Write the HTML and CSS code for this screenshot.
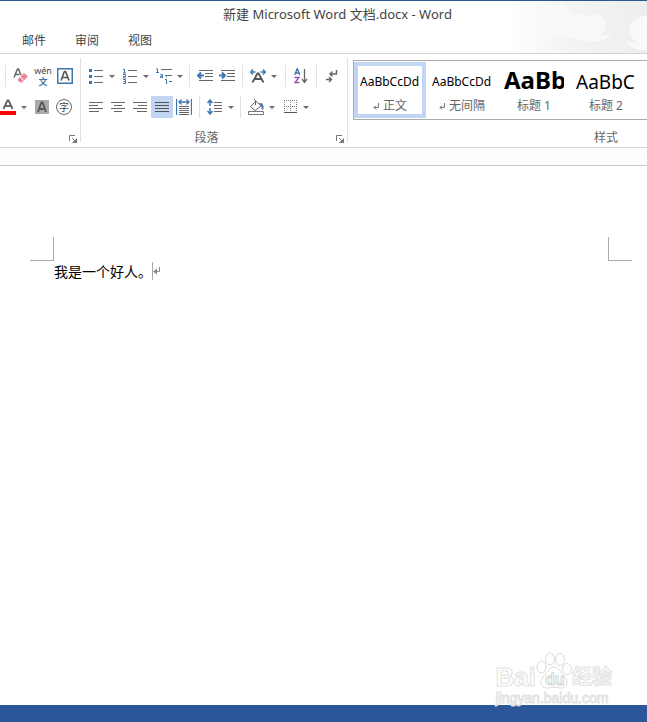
FILE: index.html
```html
<!DOCTYPE html>
<html lang="zh-CN">
<head>
<meta charset="utf-8">
<meta name="viewport" content="width=device-width, initial-scale=1">
<title>新建 Microsoft Word 文档.docx - Word</title>
<link rel="stylesheet" href="styles.css">
</head>
<body>
<svg class="defs" aria-hidden="true">
  <symbol id="caret" viewBox="0 0 6 3"><path d="M0 0h6L3 3z" fill="#6a6a6a"/></symbol>
  <symbol id="launch" viewBox="0 0 8 8"><path d="M.5 6V.5H6" fill="none" stroke="#777"/><path d="M3 3l3 3" stroke="#777"/><path d="M8 3v5H3z" fill="#777"/></symbol>
</svg>
<div class="app">
  <header class="titlebar">
    <svg class="art" viewBox="0 0 137 52" aria-hidden="true">
      <defs><linearGradient id="fade"><stop offset="0" stop-color="#fff"/><stop offset=".4" stop-color="#f4f4f4"/><stop offset="1" stop-color="#eee"/></linearGradient></defs>
      <path d="M0 0h137v52H0z" fill="url(#fade)"/>
      <path d="M30 36c4-3 3-6 1-10C25 10 37 3 45 3c9 0 17 7 19 13 4-5 9-3 11 1 5-6 18-4 20 4 2 7-3 13-9 14 6 1 11-1 15-4-3 9-15 11-25 9-12-3-30-8-46-4z" fill="#f9f9f9"/>
      <path d="M137 15c-12-1-19 9-17 17 1 4 4 8 8 9-6 2-10 0-12-2 2 7 12 11 21 10z" fill="#f9f9f9"/>
    </svg>
    <h1 class="title">新建 Microsoft Word 文档.docx - Word</h1>
    <nav class="tabs"><button>邮件</button><button>审阅</button><button>视图</button></nav>
  </header>

  <section class="ribbon">
    <div class="group font">
      <div class="row">
        <span class="sep"></span>
        <button class="tool" aria-label="清除格式"><svg width="16" height="16"><path d="M1 9.500 4.500 1h1L8 7M2.500 6.500h4" fill="none" stroke="#666" stroke-width="1.500"/><path d="M5 11l6-6 4 3.500-6 6H7L5 12.500z" fill="#e8899b"/><path d="M6.500 8.500l5 4.500" stroke="#fff"/></svg></button>
        <button class="tool pinyin" aria-label="拼音指南"><span>wén</span><b>文</b></button>
        <button class="tool" aria-label="字符边框"><svg width="16" height="16"><path d="M.75.75h14.500v14.500H.75z" fill="#fff" stroke="#3f76ac" stroke-width="1.500"/><path d="M4 12.500 7.400 3.500h1.200l3.400 9M5 9.500h6" fill="none" stroke="#555" stroke-width="1.600"/></svg></button>
      </div>
      <div class="row cut">
        <button class="tool" aria-label="字体颜色"><svg width="16" height="16"><path d="M3.500 10 7.400 1.500h1.200l3.900 8.500M5 7h6" fill="none" stroke="#666" stroke-width="1.800"/><path d="M0 12h16v4H0z" fill="red"/></svg></button>
        <button class="more" aria-label="更多颜色"><svg width="6" height="3"><use href="#caret"/></svg></button>
        <button class="tool split" aria-label="字符底纹"><svg width="14" height="14"><path d="M0 0h14v14H0z" fill="#aaa"/><path d="M3 12 6.400 2.500h1.200L11 12M4.500 9h5" fill="none" stroke="#555" stroke-width="1.800"/></svg></button>
        <button class="tool" aria-label="带圈字符"><span class="ring">字</span></button>
      </div>
      <div class="foot"><span class="label"></span><button class="launcher" aria-label="字体设置"><svg width="8" height="8"><use href="#launch"/></svg></button></div>
    </div>

    <div class="group para">
      <div class="row">
        <button class="tool" aria-label="项目符号"><svg width="14" height="16"><path d="M0 1h3v3H0zM0 7h3v3H0zM0 13h3v3H0z" fill="#3f76ac"/><path d="M5 2.500h9M5 8.500h9M5 14.500h9" stroke="#666"/></svg></button>
        <button class="more" aria-label="更多符号"><svg width="6" height="3"><use href="#caret"/></svg></button>
        <button class="tool split" aria-label="编号"><svg width="14" height="16"><path d="M0 1.500h1.500V5M0 5h3M0 6.500h2.500v2H.5V10H3M0 11.500h2.500v4H0M.5 13.500h2" fill="none" stroke="#3f76ac"/><path d="M5 2.500h9M5 8.500h9M5 14.500h9" stroke="#666"/></svg></button>
        <button class="more" aria-label="更多编号"><svg width="6" height="3"><use href="#caret"/></svg></button>
        <button class="tool split" aria-label="多级列表"><svg width="16" height="16"><path d="M0 1h1.500v3M0 4.500h3M4.500 6.500h2v3h-2V8h2M9 11.500h1.500V16M10 9h1" fill="none" stroke="#3f76ac"/><path d="M5 1.500h11M9 7.500h7M13 13.500h3" stroke="#666"/></svg></button>
        <button class="more" aria-label="更多列表"><svg width="6" height="3"><use href="#caret"/></svg></button>
        <span class="sep"></span>
        <button class="tool" aria-label="减少缩进量"><svg width="16" height="12"><path d="M2 .5h14M8 3.500h8M8 6.500h8M2 10.500h14" stroke="#666"/><path d="M7 5.500H1M4 2.500l-3 3 3 3" fill="none" stroke="#3f76ac" stroke-width="2"/></svg></button>
        <button class="tool" aria-label="增加缩进量"><svg width="16" height="12"><path d="M2 .5h14M8 3.500h8M8 6.500h8M2 10.500h14" stroke="#666"/><path d="M0 5.500h6M3 2.500l3 3-3 3" fill="none" stroke="#3f76ac" stroke-width="2"/></svg></button>
        <span class="sep"></span>
        <button class="tool" aria-label="中文版式"><svg width="16" height="14"><path d="M2.500 13.500 7.400 4.500h1.200l4.900 9M4.500 10h7" fill="none" stroke="#555" stroke-width="1.800"/><path d="M5.500 3H1M3 .5.700 3 3 5.500M10.500 3H15M13 .5 15.300 3 13 5.500" fill="none" stroke="#3f76ac" stroke-width="1.500"/></svg></button>
        <button class="more" aria-label="更多版式"><svg width="6" height="3"><use href="#caret"/></svg></button>
        <span class="sep wide"></span>
        <button class="tool" aria-label="排序"><svg width="14" height="16"><path d="M.7 7 3 1h.5l2.300 6M1.500 5h3.500" fill="none" stroke="#3f76ac" stroke-width="1.300"/><path d="M.5 9.500H5l-4 5h4.500" fill="none" stroke="#8a55b0" stroke-width="1.300"/><path d="M10.500 1v13M8 11l2.500 3.500L13 11" fill="none" stroke="#666" stroke-width="1.300"/></svg></button>
        <span class="sep"></span>
        <button class="tool" aria-label="显示编辑标记"><svg width="12" height="14"><path d="M10.500 1v4H4M6.500 2.500 4 5l2.500 2.500M0 10.500h5M3 8l2.500 2.500L3 13" fill="none" stroke="#666" stroke-width="1.400"/></svg></button>
      </div>
      <div class="row">
        <button class="tool" aria-label="左对齐"><svg width="14" height="11"><path d="M0 .5h14M0 3.500h9M0 6.500h14M0 9.500h10" stroke="#666"/></svg></button>
        <button class="tool" aria-label="居中"><svg width="14" height="11"><path d="M0 .5h14M3 3.500h8M0 6.500h14M3 9.500h8" stroke="#666"/></svg></button>
        <button class="tool" aria-label="右对齐"><svg width="14" height="11"><path d="M0 .5h14M5 3.500h9M0 6.500h14M4 9.500h10" stroke="#666"/></svg></button>
        <button class="tool on" aria-pressed="true" aria-label="两端对齐"><svg width="14" height="11"><path d="M0 .5h14M0 3.500h14M0 6.500h14M0 9.500h14" stroke="#555"/></svg></button>
        <button class="tool" aria-label="分散对齐"><svg width="16" height="16"><path d="M.5 0v16M15.500 0v16M3 3h10M5.500.5 3 3l2.500 2.500M10.500.5 13 3l-2.500 2.500" fill="none" stroke="#3f76ac" stroke-width="1.300"/><path d="M3 7.500h10M3 9.500h10M3 11.500h10M3 13.500h10M3 15.500h10" stroke="#666"/></svg></button>
        <span class="sep"></span>
        <button class="tool" aria-label="行距"><svg width="16" height="16"><path d="M3 1v14M.5 4 3 1l2.500 3M.5 12 3 15l2.500-3" fill="none" stroke="#3f76ac" stroke-width="1.500"/><path d="M3 7v2" stroke="#fff" stroke-width="2"/><path d="M7 3.500h8M7 6.500h8M7 9.500h8M7 12.500h8" stroke="#666"/></svg></button>
        <button class="more" aria-label="更多行距"><svg width="6" height="3"><use href="#caret"/></svg></button>
        <span class="sep"></span>
        <button class="tool" aria-label="底纹"><svg width="16" height="16"><path d="M2.500 7.500 8 2l5 5-6 4.500zM7.500 6V1.500L6 .5" fill="none" stroke="#666"/><path d="M11 4c3-.5 5 1 4.500 6L14 11c-.5-4-1-5-3-7z" fill="#3f76ac"/><path d="M.5 12.500h15v3H.5z" fill="#fff" stroke="#777"/></svg></button>
        <button class="more" aria-label="更多底纹"><svg width="6" height="3"><use href="#caret"/></svg></button>
        <button class="tool split" aria-label="边框"><svg width="13" height="14"><path d="M0 .5h13M0 6.500h13M.5 0v12M6.500 0v12M12.500 0v12" stroke="#777" stroke-dasharray="1 1"/><path d="M0 12.500h13" stroke="#555"/></svg></button>
        <button class="more" aria-label="更多边框"><svg width="6" height="3"><use href="#caret"/></svg></button>
      </div>
      <div class="foot"><span class="label">段落</span><button class="launcher" aria-label="段落设置"><svg width="8" height="8"><use href="#launch"/></svg></button></div>
    </div>

    <div class="group styles">
      <div class="gallery">
        <button class="style on"><span class="sample">AaBbCcDd</span><span class="name"><svg width="6" height="7"><path d="M5.500 0v4.500H1M3 2.500l-2 2 2 2" fill="none" stroke="#777"/></svg>正文</span></button>
        <button class="style"><span class="sample">AaBbCcDd</span><span class="name"><svg width="6" height="7"><path d="M5.500 0v4.500H1M3 2.500l-2 2 2 2" fill="none" stroke="#777"/></svg>无间隔</span></button>
        <button class="style"><span class="sample h1">AaBb</span><span class="name">标题 1</span></button>
        <button class="style"><span class="sample h2">AaBbC</span><span class="name">标题 2</span></button>
      </div>
      <div class="foot"><span class="label">样式</span></div>
    </div>
  </section>

  <div class="ruler"></div>

  <main class="page">
    <div class="margins"><span class="corner left"></span><span class="corner right"></span></div>
    <p class="text">我是一个好人。<span class="cursor"></span><svg width="8" height="8" aria-hidden="true"><path d="M6.500 0v4.500H1" fill="none" stroke="#888"/><path d="M4 1.500v6l-4-3z" fill="#888"/></svg></p>
  </main>

  <footer class="status"></footer>

  <div class="watermark">
    <div class="brand"><span>Bai</span>
      <svg width="36" height="38" viewBox="0 0 36 38" aria-hidden="true"><g fill="#fff" stroke="#d9d9d9"><ellipse cx="14" cy="7" rx="4.500" ry="6"/><ellipse cx="24" cy="7.500" rx="4.500" ry="6"/><ellipse cx="5.500" cy="15" rx="4.500" ry="6"/><ellipse cx="31" cy="17" rx="4.500" ry="5.500"/><path d="M18 15c5 0 6 5 10 9 6 6 2 13-4 12-5-1-7-1-11 0-7 1-11-5-6-11 4-4 6-10 11-10z"/></g><text class="du" x="9" y="33">du</text></svg>
      <span class="cn">经验</span></div>
    <div class="site">jingyan.baidu.com</div>
  </div>
</div>
</body>
</html>
```
FILE: styles.css
```css
* { box-sizing: border-box; }

body {
  margin: 0;
  background: #fff;
  color: #444;
  font: 12px/16px "Noto Sans", "Noto Sans CJK SC", sans-serif;
}

button {
  margin: 0;
  padding: 0;
  border: 0;
  background: none;
  color: inherit;
  font: inherit;
}

svg { display: block; flex: none; }

.defs { position: absolute; width: 0; height: 0; }

.app {
  position: relative;
  display: flex;
  flex-direction: column;
  min-height: 100vh;
  overflow: hidden;
}

.titlebar {
  position: relative;
  padding-top: 5px;
  border-top: 1px solid #2b579a;
  border-bottom: 1px solid #d4d4d4;
}

.art {
  position: absolute;
  top: 0;
  right: 0;
  width: 137px;
  height: 52px;
}

.title {
  position: relative;
  margin: 0;
  padding-left: 28px;
  font-size: 13px;
  font-weight: 400;
  line-height: 16px;
  text-align: center;
}

.tabs {
  position: relative;
  display: flex;
  gap: 29px;
  padding: 11px 22px 4px;
}

.tabs button { height: 16px; }

.ribbon {
  display: flex;
  border-bottom: 1px solid #d4d4d4;
}

.group {
  position: relative;
  display: flex;
  flex: none;
  flex-direction: column;
  gap: 9px;
  margin: 4px 0 1px;
  padding-top: 7px;
}

.group::after {
  content: "";
  position: absolute;
  top: 0;
  right: 0;
  bottom: 4px;
  width: 1px;
  background: #e1e1e1;
}

.font { width: 81px; padding-left: 5px; }
.para { width: 267px; padding-left: 4px; }

.row {
  display: flex;
  align-items: center;
  height: 22px;
}

.row.cut { margin-left: -8px; }

.sep {
  width: 1px;
  height: 22px;
  margin: 0 4px;
  background: #e1e1e1;
}

.font .sep { margin-left: 0; }
.sep.wide { margin-left: 6px; }

.tool, .more {
  display: flex;
  align-items: center;
  justify-content: center;
  width: 22px;
  height: 22px;
}

.more { width: 10px; }
.split { margin-left: 2px; }
.tool.on { background: #c2d5f2; }

.pinyin {
  flex-direction: column;
  font-size: 9px;
  line-height: 11px;
}

.pinyin b { color: #3f76ac; line-height: 11px; }

.ring {
  width: 16px;
  height: 16px;
  border: 1px solid #666;
  border-radius: 50%;
  font-size: 10px;
  line-height: 14px;
}

.foot {
  display: flex;
  align-items: flex-end;
  height: 19px;
  padding-right: 4px;
  color: #666;
}

.label { flex: 1; text-align: center; }
.para .label { padding-right: 8px; }
.launcher { padding-bottom: 3px; }

.styles {
  flex: 1;
  gap: 7px;
  min-width: 0;
  padding-top: 2px;
  padding-left: 5px;
}

.styles::after { display: none; }

.gallery {
  display: flex;
  height: 60px;
  padding: 1px 0;
  overflow: hidden;
  border: 1px solid #ababab;
  border-right: 0;
}

.style {
  display: flex;
  flex: none;
  flex-direction: column;
  width: 72px;
  height: 56px;
  padding: 2px 2px 0;
  border: 4px solid transparent;
}

.style.on { border-color: #c2d5f2; }

.sample {
  flex: none;
  width: 60px;
  height: 30px;
  overflow: hidden;
  color: #000;
  line-height: 28px;
  white-space: nowrap;
  text-align: left;
}

.sample.h1 { font-size: 24px; font-weight: 700; line-height: 24px; }
.sample.h2 { font-size: 19px; }

.name {
  display: flex;
  align-items: center;
  justify-content: center;
  gap: 4px;
  width: 60px;
  color: #666;
}

.styles .label { padding-left: 216px; }

.ruler {
  height: 18px;
  border-bottom: 1px solid #c8c8c8;
  background: #fdfdfd;
}

.page { flex: 1; padding: 71px 15px 0 30px; }

.margins { display: flex; justify-content: space-between; }

.corner {
  width: 24px;
  height: 24px;
  border-bottom: 1px solid #aaa;
}

.corner.left { border-right: 1px solid #aaa; }
.corner.right { border-left: 1px solid #aaa; }

.text {
  display: flex;
  align-items: center;
  margin: 0;
  padding: 1px 24px;
  color: #000;
  font: 14px/18px "Noto Sans CJK SC", sans-serif;
}

.cursor {
  width: 1px;
  height: 18px;
  background: #aaa;
}

.status { height: 17px; background: #2b579a; }

.watermark {
  position: absolute;
  right: 35px;
  bottom: 16px;
  color: #fff;
  font-family: "Liberation Sans", "Noto Sans CJK SC", sans-serif;
  -webkit-text-stroke: 1px #e2e2e2;
}

.brand {
  display: flex;
  align-items: flex-end;
  font-size: 26px;
  font-weight: 700;
  line-height: 26px;
}

.brand .cn { font-size: 20px; }
.du { fill: #fff; stroke: #d4d4d4; font-size: 16px; font-weight: 700; }
.site { font-size: 14px; line-height: 16px; }
```
